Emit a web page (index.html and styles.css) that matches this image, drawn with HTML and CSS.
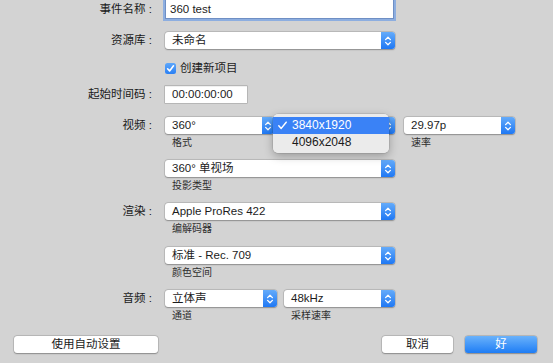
FILE: index.html
```html
<!DOCTYPE html>
<html lang="zh">
<head>
<meta charset="utf-8">
<link rel="stylesheet" href="styles.css">
</head>
<body>
<div class="dialog">
  <div class="row r-name">
    <span class="lbl">事件名称 :</span>
    <div class="field focus w229">360 test</div>
  </div>
  <div class="row r-lib">
    <span class="lbl">资源库 :</span>
    <div class="select w230"><span class="val">未命名</span><span class="step"><svg width="8" height="12" viewBox="0 0 8 12"><path d="M1.6 4.6 L4 2.2 L6.4 4.6 M1.6 7.4 L4 9.8 L6.4 7.4" fill="none" stroke="#fff" stroke-width="1.3" stroke-linecap="round" stroke-linejoin="round"/></svg></span></div>
  </div>
  <div class="row r-check">
    <span class="lbl"></span>
    <div class="check"><span class="box"><svg width="11" height="11" viewBox="0 0 11 11"><path d="M2.6 5.8 L4.6 7.9 L8.5 2.8" fill="none" stroke="#fff" stroke-width="1.6" stroke-linecap="round" stroke-linejoin="round"/></svg></span><span>创建新项目</span></div>
  </div>
  <div class="row r-tc">
    <span class="lbl">起始时间码 :</span>
    <div class="field tc">00:00:00:00</div>
  </div>

  <div class="row group first">
    <span class="lbl">视频 :</span>
    <div class="multi">
      <div class="col w109">
        <div class="select"><span class="val">360°</span><span class="step narrow"><svg width="8" height="12" viewBox="0 0 8 12"><path d="M1.6 4.6 L4 2.2 L6.4 4.6 M1.6 7.4 L4 9.8 L6.4 7.4" fill="none" stroke="#fff" stroke-width="1.3" stroke-linecap="round" stroke-linejoin="round"/></svg></span></div>
        <div class="cap">格式</div>
      </div>
      <div class="col w111 gap10 host">
        <div class="select"><span class="step"><svg width="8" height="12" viewBox="0 0 8 12"><path d="M1.6 4.6 L4 2.2 L6.4 4.6 M1.6 7.4 L4 9.8 L6.4 7.4" fill="none" stroke="#fff" stroke-width="1.3" stroke-linecap="round" stroke-linejoin="round"/></svg></span></div>
        <div class="menu">
          <div class="item sel"><svg class="tick" width="11" height="11" viewBox="0 0 11 11"><path d="M1.8 5.8 L4.2 8.4 L9.2 2.2" fill="none" stroke="#fff" stroke-width="1.5" stroke-linecap="round" stroke-linejoin="round"/></svg>3840x1920</div>
          <div class="item">4096x2048</div>
        </div>
      </div>
      <div class="col w111 gap9">
        <div class="select"><span class="val">29.97p</span><span class="step"><svg width="8" height="12" viewBox="0 0 8 12"><path d="M1.6 4.6 L4 2.2 L6.4 4.6 M1.6 7.4 L4 9.8 L6.4 7.4" fill="none" stroke="#fff" stroke-width="1.3" stroke-linecap="round" stroke-linejoin="round"/></svg></span></div>
        <div class="cap">速率</div>
      </div>
    </div>
  </div>

  <div class="row group">
    <span class="lbl"></span>
    <div class="col w230">
      <div class="select"><span class="val">360° 单视场</span><span class="step"><svg width="8" height="12" viewBox="0 0 8 12"><path d="M1.6 4.6 L4 2.2 L6.4 4.6 M1.6 7.4 L4 9.8 L6.4 7.4" fill="none" stroke="#fff" stroke-width="1.3" stroke-linecap="round" stroke-linejoin="round"/></svg></span></div>
      <div class="cap">投影类型</div>
    </div>
  </div>

  <div class="row group">
    <span class="lbl">渲染 :</span>
    <div class="col w230">
      <div class="select"><span class="val">Apple ProRes 422</span><span class="step"><svg width="8" height="12" viewBox="0 0 8 12"><path d="M1.6 4.6 L4 2.2 L6.4 4.6 M1.6 7.4 L4 9.8 L6.4 7.4" fill="none" stroke="#fff" stroke-width="1.3" stroke-linecap="round" stroke-linejoin="round"/></svg></span></div>
      <div class="cap">编解码器</div>
    </div>
  </div>

  <div class="row group plus1">
    <span class="lbl"></span>
    <div class="col w230">
      <div class="select"><span class="val">标准 - Rec. 709</span><span class="step"><svg width="8" height="12" viewBox="0 0 8 12"><path d="M1.6 4.6 L4 2.2 L6.4 4.6 M1.6 7.4 L4 9.8 L6.4 7.4" fill="none" stroke="#fff" stroke-width="1.3" stroke-linecap="round" stroke-linejoin="round"/></svg></span></div>
      <div class="cap">颜色空间</div>
    </div>
  </div>

  <div class="row group">
    <span class="lbl">音频 :</span>
    <div class="multi">
      <div class="col w112">
        <div class="select"><span class="val">立体声</span><span class="step"><svg width="8" height="12" viewBox="0 0 8 12"><path d="M1.6 4.6 L4 2.2 L6.4 4.6 M1.6 7.4 L4 9.8 L6.4 7.4" fill="none" stroke="#fff" stroke-width="1.3" stroke-linecap="round" stroke-linejoin="round"/></svg></span></div>
        <div class="cap">通道</div>
      </div>
      <div class="col w111 gap7">
        <div class="select"><span class="val">48kHz</span><span class="step"><svg width="8" height="12" viewBox="0 0 8 12"><path d="M1.6 4.6 L4 2.2 L6.4 4.6 M1.6 7.4 L4 9.8 L6.4 7.4" fill="none" stroke="#fff" stroke-width="1.3" stroke-linecap="round" stroke-linejoin="round"/></svg></span></div>
        <div class="cap">采样速率</div>
      </div>
    </div>
  </div>

  <div class="buttons">
    <div class="btn auto">使用自动设置</div>
    <div class="spacer"></div>
    <div class="btn cancel">取消</div>
    <div class="btn ok">好</div>
  </div>
</div>
</body>
</html>
```

FILE: styles.css
```css
html, body {
  margin: 0;
  padding: 0;
  background: #d3d3d3;
  overflow: hidden;
}
body {
  width: 553px;
  height: 363px;
  font-family: "Liberation Sans", "Noto Sans CJK SC", sans-serif;
  font-size: 11.5px;
  color: #1c1c1c;
}
.dialog {
  display: flex;
  flex-direction: column;
}
.row {
  display: grid;
  grid-template-columns: 152px auto;
  column-gap: 13px;
  align-items: start;
}
.lbl {
  text-align: right;
  line-height: 17px;
  white-space: nowrap;
  color: #1a1a1a;
}
.r-name { margin-top: -3px; height: 22px; }
.r-name .lbl { line-height: 20px; padding-top: 2px; }
.r-lib { margin-top: 13px; }
.r-check { margin-top: 11px; }
.r-tc { margin-top: 10px; }
.group { margin-top: 0; }
.group.first { margin-top: 14px; }
.group.plus1 { margin-top: 1px; }

.w229 { width: 229px; }
.w230 { width: 230px; }
.w109 { width: 109px; }
.w111 { width: 111px; }
.w112 { width: 112px; }
.gap10 { margin-left: 10px; }
.gap9 { margin-left: 9px; }
.gap7 { margin-left: 7px; }

.field {
  box-sizing: border-box;
  background: #fff;
  height: 17px;
  line-height: 17px;
  padding-left: 7px;
  box-shadow: 0 0 0 0.5px rgba(0, 0, 0, 0.28), inset 0 1px 0 rgba(0, 0, 0, 0.06);
  white-space: nowrap;
}
.field.focus {
  height: 22px;
  line-height: 23px;
  padding-left: 4px;
  border: 1px solid #6f8fc4;
  box-shadow: 0 0 0 2px #8daee0;
}
.field.tc {
  width: 82px;
}

.select {
  position: relative;
  box-sizing: border-box;
  height: 17px;
  background: #fff;
  border-radius: 3px;
  padding-left: 7px;
  line-height: 17px;
  white-space: nowrap;
  box-shadow: 0 0 0 0.5px rgba(0, 0, 0, 0.16), 0 0.5px 1.5px rgba(0, 0, 0, 0.28);
}
.step {
  position: absolute;
  top: 0;
  right: 0;
  bottom: 0;
  width: 14px;
  border-radius: 0 3px 3px 0;
  background: linear-gradient(#64abfa, #1f78f4);
  display: flex;
  align-items: center;
  justify-content: center;
}
.step.narrow { width: 12px; }

.multi {
  display: flex;
  align-items: flex-start;
}
.col {
  display: flex;
  flex-direction: column;
}
.cap {
  box-sizing: border-box;
  height: 26px;
  padding: 3px 0 0 7px;
  font-size: 10px;
  line-height: 12px;
  color: #2e2e2e;
}

.check {
  display: flex;
  align-items: center;
  height: 16px;
  gap: 4px;
  line-height: 16px;
}
.box {
  width: 11px;
  height: 11px;
  border-radius: 2.5px;
  background: linear-gradient(#5ea7fa, #2a80f5);
  display: flex;
}

.host { position: relative; }
.menu {
  position: absolute;
  left: -11px;
  top: -3px;
  width: 116px;
  box-sizing: border-box;
  padding: 3px 0 2px;
  background: rgba(236, 236, 236, 0.98);
  border-radius: 5px;
  box-shadow: 0 3px 10px rgba(0, 0, 0, 0.28), 0 0 0 0.5px rgba(0, 0, 0, 0.15);
  z-index: 5;
}
.item {
  position: relative;
  height: 17px;
  line-height: 17px;
  padding-left: 19px;
  font-size: 12px;
  color: #1a1a1a;
}
.item.sel {
  background: #3a82f6;
  color: #fff;
}
.tick {
  position: absolute;
  left: 4px;
  top: 3px;
}

.buttons {
  display: flex;
  margin-top: 3px;
  padding: 0 16px 0 14px;
  gap: 12px;
}
.spacer { flex: 1; }
.btn {
  height: 17px;
  line-height: 17px;
  text-align: center;
  background: #fff;
  border-radius: 3px;
  box-shadow: 0 0 0 0.5px rgba(0, 0, 0, 0.18), 0 0.5px 1.5px rgba(0, 0, 0, 0.28);
  color: #1a1a1a;
}
.btn.auto { width: 144px; }
.btn.cancel { width: 71px; }
.btn.ok {
  width: 72px;
  color: #fff;
  background: linear-gradient(#6ab2fb, #1e7df5);
}
```
